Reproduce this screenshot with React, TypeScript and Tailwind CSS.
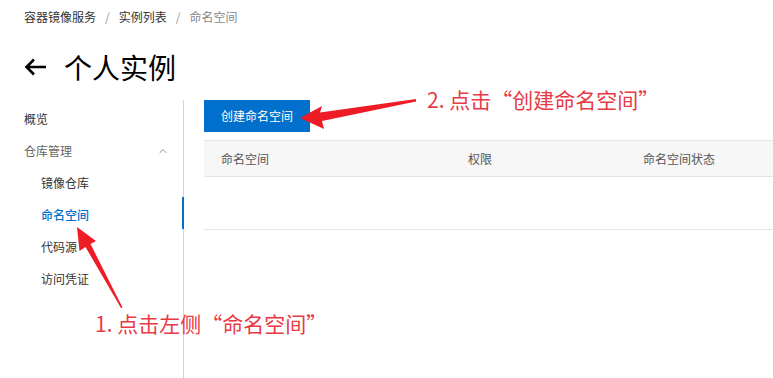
import { ChevronUp } from 'lucide-react'

const SIDE_ITEMS = [
  { label: '镜像仓库', active: false },
  { label: '命名空间', active: true },
  { label: '代码源', active: false },
  { label: '访问凭证', active: false },
]

const CJK = { fontFamily: '"Noto Sans CJK SC", "Noto Sans", sans-serif' }

export default function App() {
  return (
    <div className="relative w-[773px] h-[378px] overflow-hidden bg-white text-[#333]" style={CJK}>
      {/* Breadcrumb */}
      <div className="flex items-center gap-[9px] px-6 pt-[9px] text-[12px] leading-[16px]">
        <span className="text-[#333]">容器镜像服务</span>
        <span className="text-[#999]">/</span>
        <span className="text-[#333]">实例列表</span>
        <span className="text-[#999]">/</span>
        <span className="text-[#888]">命名空间</span>
      </div>

      {/* Title */}
      <div className="flex items-center gap-[17px] px-6 mt-[24px] h-[36px]">
        <svg width="23" height="18" viewBox="0 0 23 18" className="shrink-0">
          <path d="M22 9H2.5M10 1.5L2.5 9L10 16.5" fill="none" stroke="#000" strokeWidth="2.6" />
        </svg>
        <h1 className="text-[28px] leading-[36px] text-black">个人实例</h1>
      </div>

      <div className="flex mt-[15px]">
        {/* Sidebar */}
        <div className="w-[184px] shrink-0 border-r border-[#d4d4d4] h-[278px] relative">
          <div className="flex flex-col text-[12px]">
            <div className="h-[32px] flex items-center pl-6 text-[#333] mt-[3px]">概览</div>
            <div className="h-[32px] flex items-center justify-between pl-6 pr-[14px] text-[#666]">
              <span>仓库管理</span>
              <ChevronUp size={12} strokeWidth={1.5} className="text-[#666]" />
            </div>
            {SIDE_ITEMS.map(it => (
              <div
                key={it.label}
                className={`h-[32px] flex items-center pl-[41px] ${it.active ? 'text-[#0070cc] font-medium' : 'text-[#333]'}`}
              >
                {it.label}
              </div>
            ))}
          </div>
          <div className="absolute right-[-1px] top-[97px] w-[2px] h-[32px] bg-[#0070cc]" />
        </div>

        {/* Main */}
        <div className="flex-1 pl-5">
          <button className="h-[32px] w-[106px] bg-[#0070cc] text-white text-[12px]">创建命名空间</button>
          <div className="mt-[8px] grid grid-cols-[247px_175px_1fr] h-[37px] items-center bg-[#f7f7f7] border-y border-[#e5e5e5] text-[12px] text-[#555]">
            <span className="pl-[17px]">命名空间</span>
            <span className="pl-[17px]">权限</span>
            <span className="pl-[17px]">命名空间状态</span>
          </div>
          <div className="h-[53px] border-b border-[#e5e5e5]" />
        </div>
      </div>

      {/* Annotations */}
      <svg className="absolute inset-0 pointer-events-none" width="773" height="378">
        <polygon
          points="300,118 322,106 320,112.5 416,99 416,101.5 322,121 324,129"
          fill="#ee1c25"
        />
        <polygon
          points="77,227 96,241 90.5,244 122.5,307.5 121,308 85.5,247 79.5,251"
          fill="#ee1c25"
        />
      </svg>
      <div className="absolute left-[427px] top-[85px] text-[21px] leading-[28px] text-[#e83a45] whitespace-nowrap">
        2. 点击“创建命名空间”
      </div>
      <div className="absolute left-[95px] top-[309px] text-[21px] leading-[28px] text-[#e83a45] whitespace-nowrap">
        1. 点击左侧“命名空间”
      </div>
    </div>
  )
}
